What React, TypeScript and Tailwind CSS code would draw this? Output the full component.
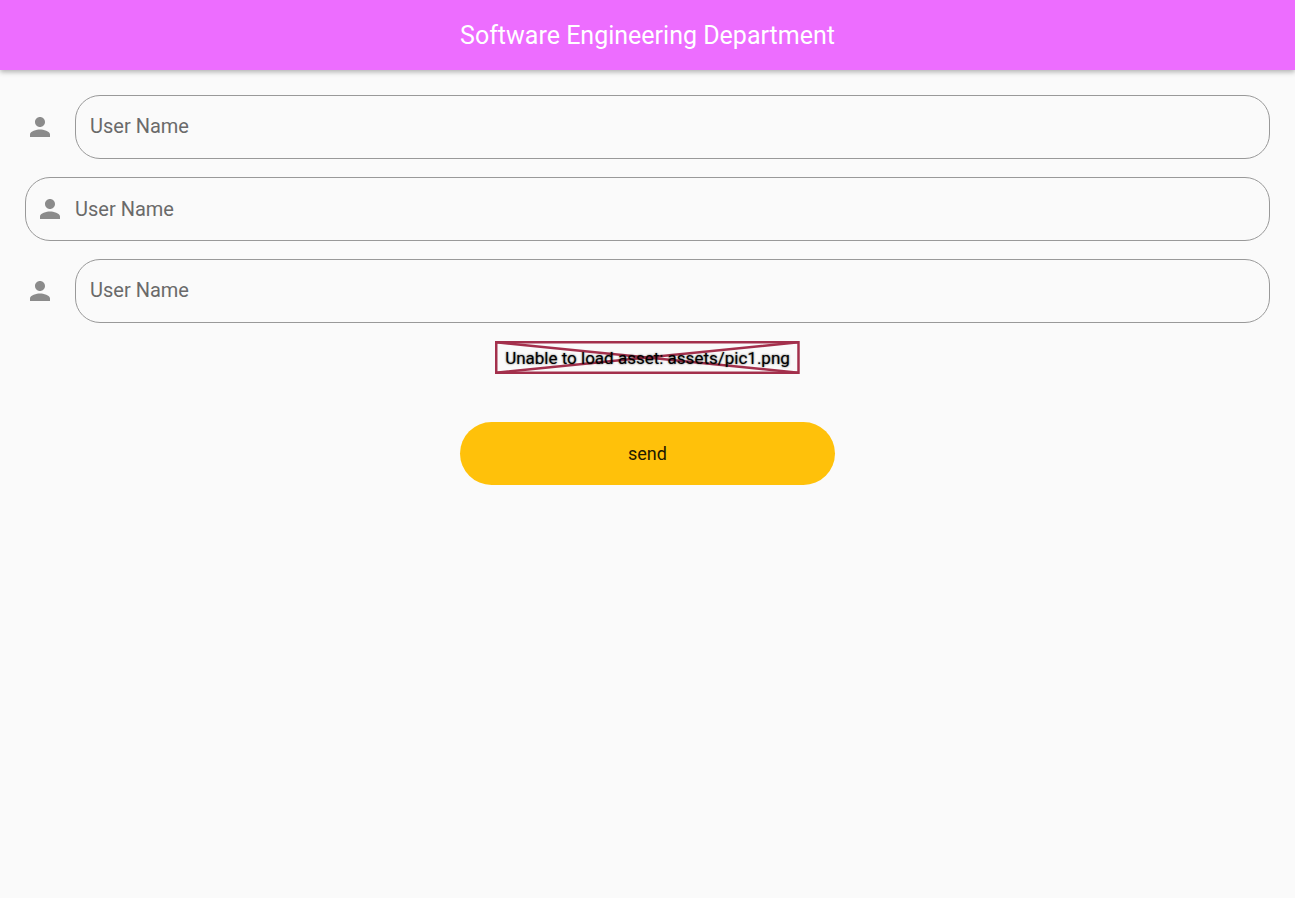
import React, { useId } from "react";

function PersonIcon() {
  return (
    <svg viewBox="0 0 24 24" className="size-[30px] shrink-0 fill-[#8b8b8b]" aria-hidden="true">
      <path d="M12 12c2.21 0 4-1.79 4-4s-1.79-4-4-4-4 1.79-4 4 1.79 4 4 4zm0 2c-2.67 0-8 1.34-8 4v2h16v-2c0-2.66-5.33-4-8-4z" />
    </svg>
  );
}

const inputText =
  "text-xl leading-6 text-[#212121] outline-none placeholder:text-[#6a6a6a] placeholder:opacity-100";

function OutsideIconField() {
  const id = useId();
  return (
    <div className="flex items-center gap-5">
      <label htmlFor={id} aria-label="User Name">
        <PersonIcon />
      </label>
      <input
        id={id}
        type="text"
        placeholder="User Name"
        className={`h-16 min-w-0 flex-1 rounded-[25px] border border-[#999999] bg-transparent px-3.5 pb-0.5 ${inputText}`}
      />
    </div>
  );
}

function InsideIconField() {
  const id = useId();
  return (
    <div className="flex h-16 items-center gap-2.5 rounded-[25px] border border-[#999999] px-[9px]">
      <label htmlFor={id} aria-label="User Name">
        <PersonIcon />
      </label>
      <input
        id={id}
        type="text"
        placeholder="User Name"
        className={`min-w-0 flex-1 bg-transparent ${inputText}`}
      />
    </div>
  );
}

function MissingAsset({ path }: { path: string }) {
  return (
    <div className="relative mt-[18px] flex h-[33px] items-center self-center px-2.5">
      <svg
        className="absolute inset-0 size-full"
        viewBox="0 0 307 33"
        preserveAspectRatio="none"
        fill="none"
        stroke="#a3304c"
        strokeWidth="2.5"
        aria-hidden="true"
      >
        <rect x="1.25" y="1.25" width="304.5" height="30.5" />
        <path d="M1.25 1.25 305.75 31.75M305.75 1.25 1.25 31.75" />
      </svg>
      <p className="relative text-[17px] leading-6 whitespace-nowrap text-black [text-shadow:0_0_2px_rgba(0,0,0,0.7)]">
        Unable to load asset: {path}
      </p>
    </div>
  );
}

export default function App() {
  return (
    <div className="min-h-screen bg-[#fafafa] font-[Roboto,sans-serif]">
      <header className="flex h-[70px] items-center justify-center bg-[#ed6dff] pt-0.5 shadow-[0_2px_5px_rgba(0,0,0,0.3)]">
        <h1 className="text-[25px] leading-8 font-normal text-white">Software Engineering Department</h1>
      </header>
      <main className="flex flex-col px-[25px] pt-[25px]">
        <form className="flex flex-col" onSubmit={(e) => e.preventDefault()}>
          <div className="flex flex-col gap-[18px]">
            <OutsideIconField />
            <InsideIconField />
            <OutsideIconField />
          </div>
          <MissingAsset path="assets/pic1.png" />
          <button
            type="submit"
            className="mt-12 h-[63px] w-[375px] max-w-full self-center rounded-full bg-[#ffc10a] text-lg leading-6 font-normal text-[#211900]"
          >
            send
          </button>
        </form>
      </main>
    </div>
  );
}
